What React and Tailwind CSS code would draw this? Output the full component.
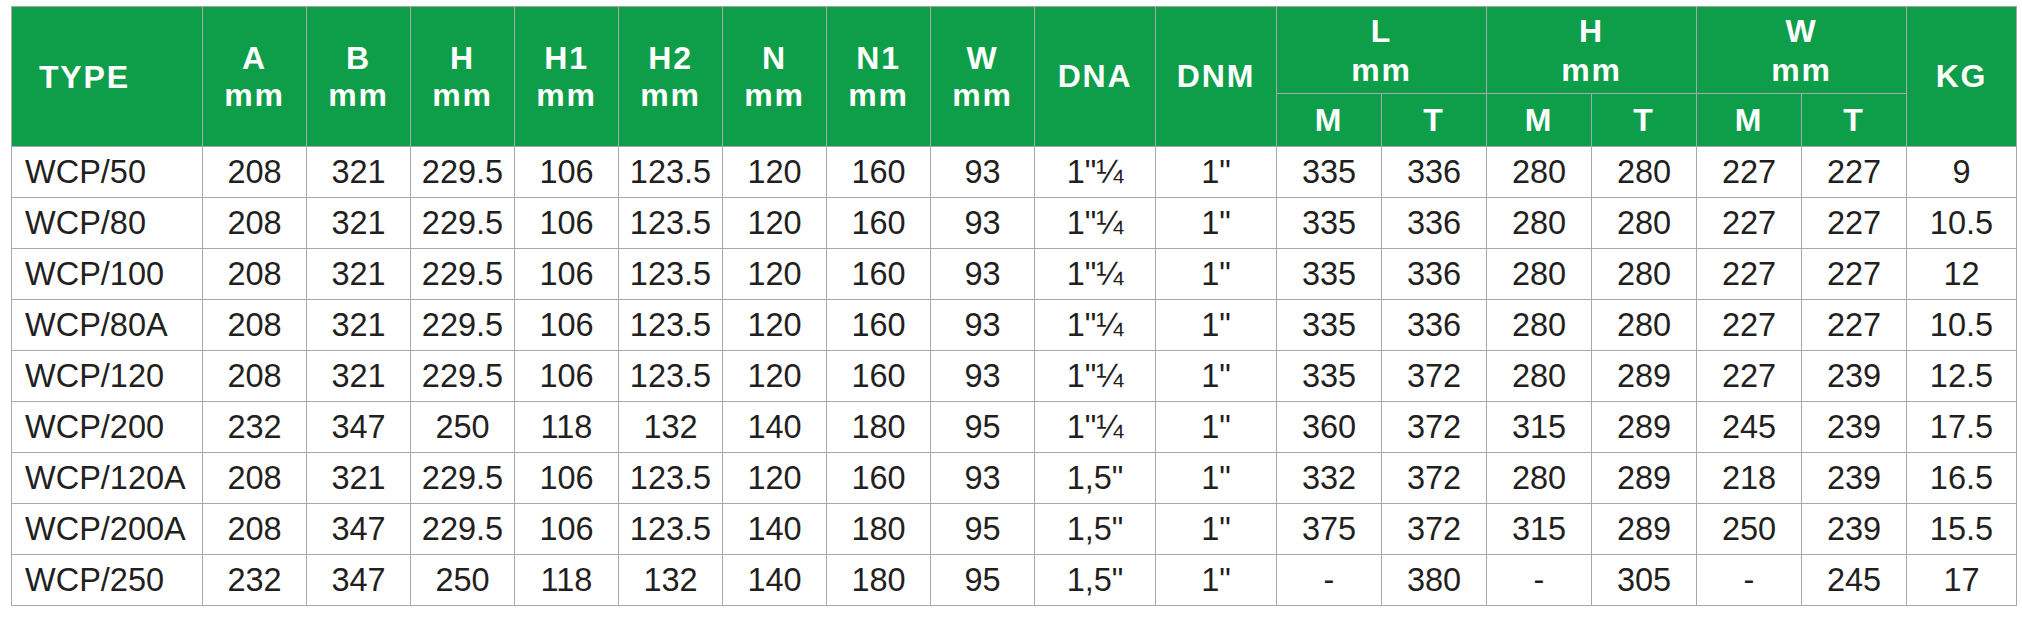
import React from "react";

const rows = [
  ["WCP/50", "208", "321", "229.5", "106", "123.5", "120", "160", "93", "1\"¼", "1\"", "335", "336", "280", "280", "227", "227", "9"],
  ["WCP/80", "208", "321", "229.5", "106", "123.5", "120", "160", "93", "1\"¼", "1\"", "335", "336", "280", "280", "227", "227", "10.5"],
  ["WCP/100", "208", "321", "229.5", "106", "123.5", "120", "160", "93", "1\"¼", "1\"", "335", "336", "280", "280", "227", "227", "12"],
  ["WCP/80A", "208", "321", "229.5", "106", "123.5", "120", "160", "93", "1\"¼", "1\"", "335", "336", "280", "280", "227", "227", "10.5"],
  ["WCP/120", "208", "321", "229.5", "106", "123.5", "120", "160", "93", "1\"¼", "1\"", "335", "372", "280", "289", "227", "239", "12.5"],
  ["WCP/200", "232", "347", "250", "118", "132", "140", "180", "95", "1\"¼", "1\"", "360", "372", "315", "289", "245", "239", "17.5"],
  ["WCP/120A", "208", "321", "229.5", "106", "123.5", "120", "160", "93", "1,5\"", "1\"", "332", "372", "280", "289", "218", "239", "16.5"],
  ["WCP/200A", "208", "347", "229.5", "106", "123.5", "140", "180", "95", "1,5\"", "1\"", "375", "372", "315", "289", "250", "239", "15.5"],
  ["WCP/250", "232", "347", "250", "118", "132", "140", "180", "95", "1,5\"", "1\"", "-", "380", "-", "305", "-", "245", "17"],
];

const H =
  "bg-[#0e9e4a] text-white font-bold text-[32px] leading-[37px] tracking-[1.8px] flex flex-col items-center justify-center text-center";

function HeadTwo({ top }) {
  return (
    <div className={`${H} row-span-2`}>
      <span>{top}</span>
      <span>mm</span>
    </div>
  );
}

function Group({ top }) {
  return (
    <div className={`${H} col-span-2 leading-[39px] pt-[2px]`}>
      <span>{top}</span>
      <span>mm</span>
    </div>
  );
}

export default function App() {
  return (
    <div
      className="bg-white w-[2022px] h-[632px] pt-[6px] pl-[11px]"
      style={{ fontFamily: '"Liberation Sans", Arial, sans-serif' }}
    >
      <div className="w-[2006px] h-[600px] bg-[#a8a8a8] p-px gap-px grid grid-cols-[190px_repeat(8,103px)_120px_120px_repeat(6,104px)_109px] grid-rows-[86px_52px_repeat(9,50px)]">
        <div className="bg-[#0e9e4a] text-white font-bold text-[32px] tracking-[1.8px] row-span-2 flex items-center pl-[27px]">
          TYPE
        </div>
        <HeadTwo top="A" />
        <HeadTwo top="B" />
        <HeadTwo top="H" />
        <HeadTwo top="H1" />
        <HeadTwo top="H2" />
        <HeadTwo top="N" />
        <HeadTwo top="N1" />
        <HeadTwo top="W" />
        <div className={`${H} row-span-2`}>DNA</div>
        <div className={`${H} row-span-2`}>DNM</div>
        <Group top="L" />
        <Group top="H" />
        <Group top="W" />
        <div className={`${H} row-span-2`}>KG</div>
        <div className={H}>M</div>
        <div className={H}>T</div>
        <div className={H}>M</div>
        <div className={H}>T</div>
        <div className={H}>M</div>
        <div className={H}>T</div>
        {rows.map((r, i) =>
          r.map((c, j) => (
            <div
              key={`${i}-${j}`}
              className={`bg-white text-[#231f20] text-[32.5px] leading-none flex items-center ${
                j === 0 ? "pl-[13px]" : "justify-center"
              }`}
            >
              {c}
            </div>
          ))
        )}
      </div>
    </div>
  );
}
